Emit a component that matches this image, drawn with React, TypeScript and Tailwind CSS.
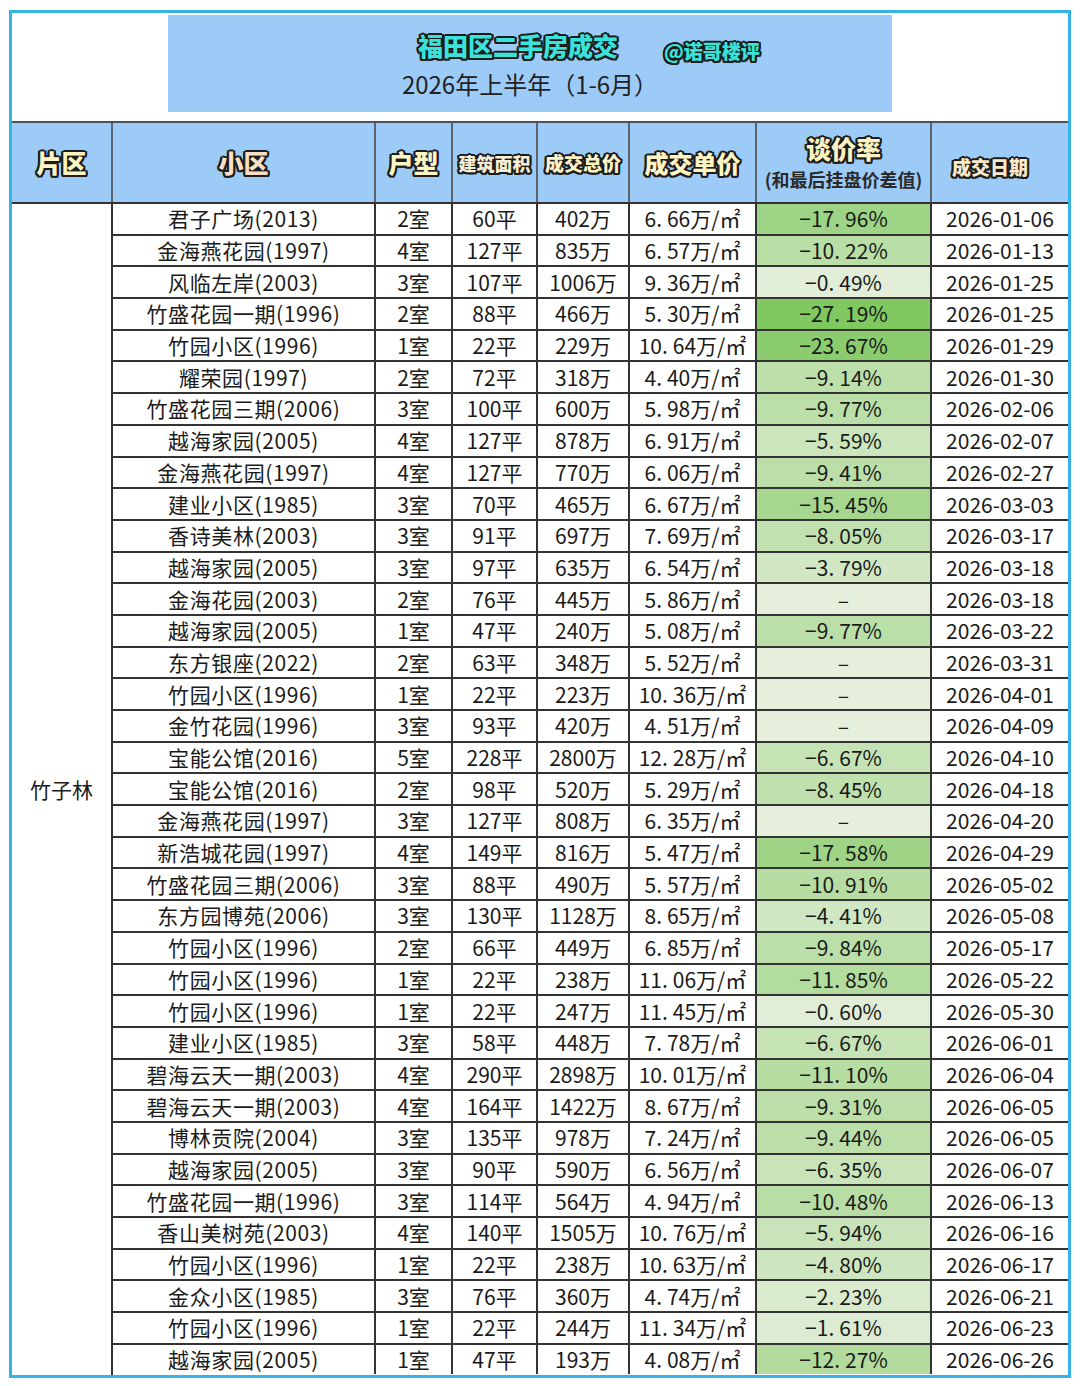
import React from "react";

type Row = [string, string, string, string, string, string | null, string];

const rows: Row[] = [
  ["君子广场(2013)", "2室", "60平", "402万", "6.66", "-17.96", "2026-01-06"],
  ["金海燕花园(1997)", "4室", "127平", "835万", "6.57", "-10.22", "2026-01-13"],
  ["风临左岸(2003)", "3室", "107平", "1006万", "9.36", "-0.49", "2026-01-25"],
  ["竹盛花园一期(1996)", "2室", "88平", "466万", "5.30", "-27.19", "2026-01-25"],
  ["竹园小区(1996)", "1室", "22平", "229万", "10.64", "-23.67", "2026-01-29"],
  ["耀荣园(1997)", "2室", "72平", "318万", "4.40", "-9.14", "2026-01-30"],
  ["竹盛花园三期(2006)", "3室", "100平", "600万", "5.98", "-9.77", "2026-02-06"],
  ["越海家园(2005)", "4室", "127平", "878万", "6.91", "-5.59", "2026-02-07"],
  ["金海燕花园(1997)", "4室", "127平", "770万", "6.06", "-9.41", "2026-02-27"],
  ["建业小区(1985)", "3室", "70平", "465万", "6.67", "-15.45", "2026-03-03"],
  ["香诗美林(2003)", "3室", "91平", "697万", "7.69", "-8.05", "2026-03-17"],
  ["越海家园(2005)", "3室", "97平", "635万", "6.54", "-3.79", "2026-03-18"],
  ["金海花园(2003)", "2室", "76平", "445万", "5.86", null, "2026-03-18"],
  ["越海家园(2005)", "1室", "47平", "240万", "5.08", "-9.77", "2026-03-22"],
  ["东方银座(2022)", "2室", "63平", "348万", "5.52", null, "2026-03-31"],
  ["竹园小区(1996)", "1室", "22平", "223万", "10.36", null, "2026-04-01"],
  ["金竹花园(1996)", "3室", "93平", "420万", "4.51", null, "2026-04-09"],
  ["宝能公馆(2016)", "5室", "228平", "2800万", "12.28", "-6.67", "2026-04-10"],
  ["宝能公馆(2016)", "2室", "98平", "520万", "5.29", "-8.45", "2026-04-18"],
  ["金海燕花园(1997)", "3室", "127平", "808万", "6.35", null, "2026-04-20"],
  ["新浩城花园(1997)", "4室", "149平", "816万", "5.47", "-17.58", "2026-04-29"],
  ["竹盛花园三期(2006)", "3室", "88平", "490万", "5.57", "-10.91", "2026-05-02"],
  ["东方园博苑(2006)", "3室", "130平", "1128万", "8.65", "-4.41", "2026-05-08"],
  ["竹园小区(1996)", "2室", "66平", "449万", "6.85", "-9.84", "2026-05-17"],
  ["竹园小区(1996)", "1室", "22平", "238万", "11.06", "-11.85", "2026-05-22"],
  ["竹园小区(1996)", "1室", "22平", "247万", "11.45", "-0.60", "2026-05-30"],
  ["建业小区(1985)", "3室", "58平", "448万", "7.78", "-6.67", "2026-06-01"],
  ["碧海云天一期(2003)", "4室", "290平", "2898万", "10.01", "-11.10", "2026-06-04"],
  ["碧海云天一期(2003)", "4室", "164平", "1422万", "8.67", "-9.31", "2026-06-05"],
  ["博林贡院(2004)", "3室", "135平", "978万", "7.24", "-9.44", "2026-06-05"],
  ["越海家园(2005)", "3室", "90平", "590万", "6.56", "-6.35", "2026-06-07"],
  ["竹盛花园一期(1996)", "3室", "114平", "564万", "4.94", "-10.48", "2026-06-13"],
  ["香山美树苑(2003)", "4室", "140平", "1505万", "10.76", "-5.94", "2026-06-16"],
  ["竹园小区(1996)", "1室", "22平", "238万", "10.63", "-4.80", "2026-06-17"],
  ["金众小区(1985)", "3室", "76平", "360万", "4.74", "-2.23", "2026-06-21"],
  ["竹园小区(1996)", "1室", "22平", "244万", "11.34", "-1.61", "2026-06-23"],
  ["越海家园(2005)", "1室", "47平", "193万", "4.08", "-12.27", "2026-06-26"],
];

const stroke =
  "[text-shadow:2px_0_0_#1c1c1c,-2px_0_0_#1c1c1c,0_2px_0_#1c1c1c,0_-2px_0_#1c1c1c,1.5px_1.5px_0_#1c1c1c,-1.5px_-1.5px_0_#1c1c1c,1.5px_-1.5px_0_#1c1c1c,-1.5px_1.5px_0_#1c1c1c,2px_1px_0_#1c1c1c,-2px_1px_0_#1c1c1c,2px_-1px_0_#1c1c1c,-2px_-1px_0_#1c1c1c]";

function greenBg(v: string | null): string {
  if (v === null) return "rgb(229,239,220)";
  const t = Math.pow(Math.min(1, Math.abs(parseFloat(v)) / 27.19), 0.85);
  const r = Math.round(229 - t * (229 - 128));
  const g = Math.round(239 - t * (239 - 200));
  const b = Math.round(220 - t * (220 - 96));
  return `rgb(${r},${g},${b})`;
}

function Dotted({ v }: { v: string }) {
  const [a, b] = v.split(".");
  return (
    <>
      {a.replace("-", "−")}
      <span className="mr-[5px]">.</span>
      {b}
    </>
  );
}

const cell =
  "flex items-center justify-center border-r-2 border-[#333] text-[21px] leading-none text-[#1a1a1a] whitespace-nowrap";

export default function App() {
  return (
    <div className="w-[1080px] h-[1386px] bg-white pt-[10px] pl-[9px] font-['Noto_Sans_CJK_SC','Noto_Sans',sans-serif]">
      <div className="w-[1062px] h-[1368px] border-[3px] border-[#36b3e6] flex flex-col overflow-hidden">
        {/* Title area */}
        <div className="h-[108px] flex">
          <div className="ml-[156px] mt-[2px] w-[724px] h-[97px] bg-[#9ccbf8] flex flex-col">
            <div className="flex items-center h-[50px] pt-[10px] pl-[250px]">
              <span className={`text-[25px] font-black leading-none text-[#39e3dc] ${stroke}`}>
                福田区二手房成交
              </span>
              <span className={`ml-[46px] mt-[10px] text-[19px] font-black leading-none text-[#39e3dc] ${stroke}`}>
                @诺哥楼评
              </span>
            </div>
            <div className="flex justify-center items-center h-[38px] text-[24px] leading-none text-[#222]">
              2026年上半年（1-6月）
            </div>
          </div>
        </div>
        <div className="h-[2px] bg-[#4a525c]" />
        {/* Header */}
        <div className="h-[79px] bg-[#9dcbf7] grid grid-cols-[101px_263px_77px_85px_92px_127px_175px_136px]">
          <div className="flex items-center justify-center border-r-2 border-[#5a6470]">
            <span className={`text-[25px] font-black leading-none text-[#fdf5c2] ${stroke}`}>片区</span>
          </div>
          <div className="flex items-center justify-center border-r-2 border-[#5a6470]">
            <span className={`text-[25px] font-black leading-none text-[#f8dfc6] ${stroke}`}>小区</span>
          </div>
          <div className="flex items-center justify-center border-r-2 border-[#5a6470]">
            <span className={`text-[25px] font-black leading-none text-[#fdf5c4] ${stroke}`}>户型</span>
          </div>
          <div className="flex items-center justify-center border-r-2 border-[#5a6470]">
            <span className={`text-[18px] font-black leading-none text-[#f6eed6] ${stroke}`}>建筑面积</span>
          </div>
          <div className="flex items-center justify-center border-r-2 border-[#5a6470]">
            <span className={`text-[19px] font-black leading-none text-[#fff3c6] ${stroke}`}>成交总价</span>
          </div>
          <div className="flex items-center justify-center border-r-2 border-[#5a6470]">
            <span className={`text-[24px] font-black leading-none text-[#fff5c2] ${stroke}`}>成交单价</span>
          </div>
          <div className="flex flex-col items-center justify-center border-r-2 border-[#5a6470]">
            <span className={`text-[25px] font-black leading-none text-[#fff3c2] ${stroke} mt-[-2px]`}>谈价率</span>
            <span className="mt-[9px] text-[18px] font-bold leading-none text-[#2a2a2a]">(和最后挂盘价差值)</span>
          </div>
          <div className="flex items-center justify-center pt-[8px] pr-[20px]">
            <span className={`text-[19px] font-black leading-none text-[#fbe9cb] ${stroke}`}>成交日期</span>
          </div>
        </div>
        {/* Body */}
        <div className="flex flex-1">
          <div className="w-[101px] shrink-0 border-r-2 border-t-2 border-[#333] flex items-center justify-center text-[21px] leading-none text-[#1a1a1a]">
            竹子林
          </div>
          <div className="flex flex-col">
            {rows.map((r, i) => (
              <div
                key={i}
                className="grid grid-cols-[263px_77px_85px_92px_127px_175px_136px] h-[31.7px] shrink-0 border-t-2 border-[#333]"
              >
                <div className={`${cell} tracking-[0.6px]`}>{r[0]}</div>
                <div className={cell}>{r[1]}</div>
                <div className={cell}>{r[2]}</div>
                <div className={cell}>{r[3]}</div>
                <div className={cell}>
                  <Dotted v={r[4]} />
                  万/㎡
                </div>
                <div className={cell} style={{ backgroundColor: greenBg(r[5]) }}>
                  {r[5] === null ? (
                    "–"
                  ) : (
                    <>
                      <Dotted v={r[5]} />%
                    </>
                  )}
                </div>
                <div className="flex items-center justify-center text-[21px] leading-none text-[#1a1a1a] whitespace-nowrap">
                  {r[6]}
                </div>
              </div>
            ))}
          </div>
        </div>
      </div>
    </div>
  );
}
